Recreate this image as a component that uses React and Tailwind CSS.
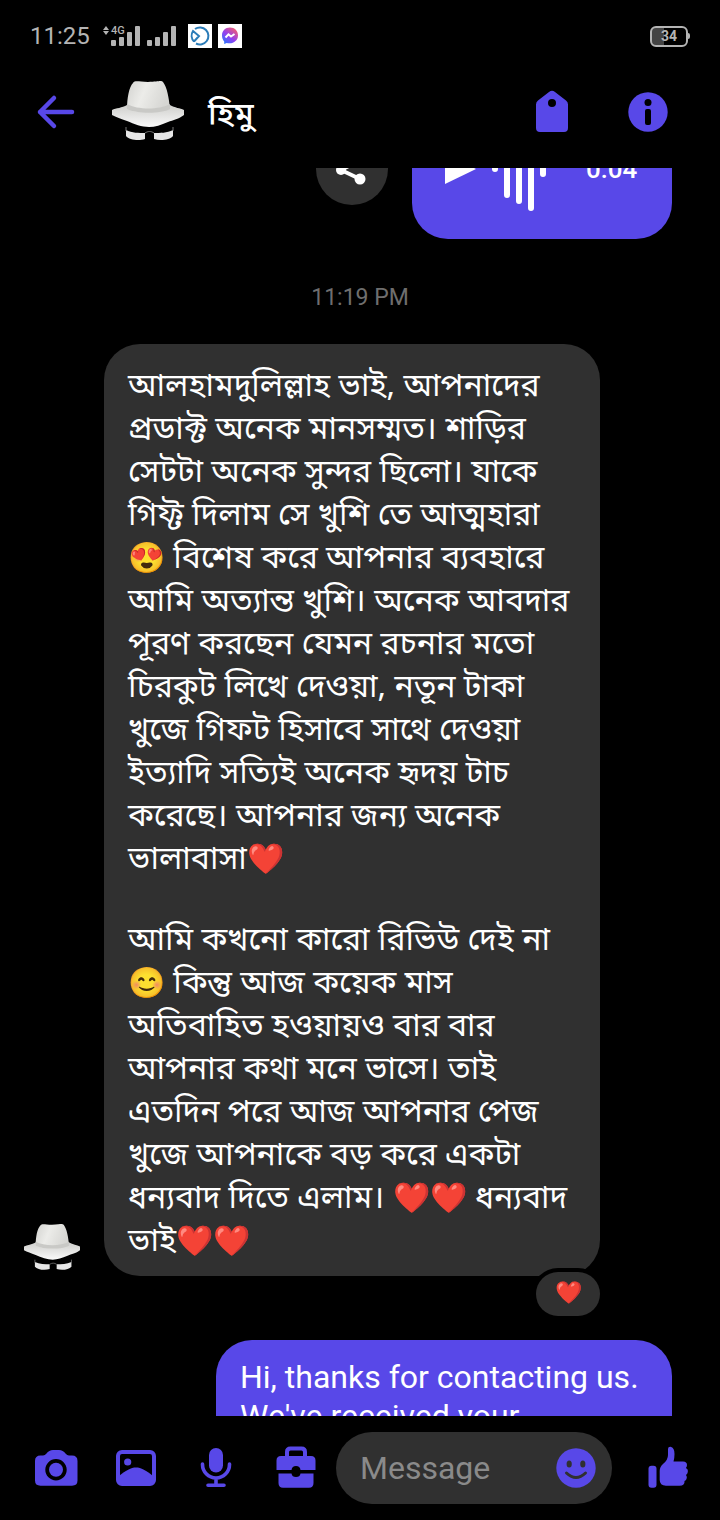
import { useLayoutEffect, useRef } from "react";

const REVIEW = `আলহামদুলিল্লাহ ভাই, আপনাদের
প্রডাক্ট অনেক মানসম্মত। শাড়ির
সেটটা অনেক সুন্দর ছিলো। যাকে
গিফ্ট দিলাম সে খুশি তে আত্মহারা
😍 বিশেষ করে আপনার ব্যবহারে
আমি অত্যান্ত খুশি। অনেক আবদার
পূরণ করছেন যেমন রচনার মতো
চিরকুট লিখে দেওয়া, নতূন টাকা
খুজে গিফট হিসাবে সাথে দেওয়া
ইত্যাদি সত্যিই অনেক হৃদয় টাচ
করেছে। আপনার জন্য অনেক
ভালাবাসা❤️`;

const REVIEW_MORE = `আমি কখনো কারো রিভিউ দেই না
😊 কিন্তু আজ কয়েক মাস
অতিবাহিত হওয়ায়ও বার বার
আপনার কথা মনে ভাসে। তাই
এতদিন পরে আজ আপনার পেজ
খুজে আপনাকে বড় করে একটা
ধন্যবাদ দিতে এলাম। ❤️❤️ ধন্যবাদ
ভাই❤️❤️`;

// emoji are set a little smaller than the words around them
function MessageText({ text }) {
  return text
    .split(/((?:😍|😊|❤️)+)/u)
    .map((part, i) =>
      i % 2 ? (
        <span key={i} className="text-[30px]">
          {part}
        </span>
      ) : (
        part
      ),
    );
}

function HatAvatar({ id, className }) {
  return (
    <svg viewBox="0 0 72 72" className={className} role="img" aria-label="হিমু">
      <defs>
        <linearGradient id={`${id}-crown`} x1="0" x2="1" y1="0" y2="0.3">
          <stop offset="0" stopColor="#d2d2cf" />
          <stop offset="0.45" stopColor="#ecece9" />
          <stop offset="1" stopColor="#d6d6d3" />
        </linearGradient>
        <linearGradient id={`${id}-brim`} x1="0" x2="0" y1="0" y2="1">
          <stop offset="0" stopColor="#cfcfcc" />
          <stop offset="1" stopColor="#fafafa" />
        </linearGradient>
      </defs>
      <path
        d="M0 34C4 32 10 32 15 29H58C63 32 68 32 72 34V39C67 43 61 44 56 46C49 49 43 51 37 51C30 51 22 48 15 45C9 43 4 41 0 39Z"
        fill={`url(#${id}-brim)`}
      />
      <path
        d="M15 33C15 22 17 11 21 7C23 4 27 6 36 6C46 6 49 4 51 6C55 11 57 22 58 33C48 38 25 38 15 33Z"
        fill={`url(#${id}-crown)`}
      />
      <path
        d="M15 28C26 34 47 34 58 28L58 33C48 38 25 38 15 33Z"
        fill="#c9c9c6"
      />
      <path
        d="M14 54C20 57 27 57 33 57V63C27 65 17 64 14 60Z"
        fill="#e6e6e6"
      />
      <path
        d="M61 54C55 57 48 57 42 57V63C48 65 58 64 61 60Z"
        fill="#e6e6e6"
      />
      <path
        d="M14 51L14 55M61 51L61 55M33 57C36 55 39 55 42 57"
        stroke="#777"
        strokeWidth="1"
        fill="none"
      />
    </svg>
  );
}

function SignalBars({ network }) {
  return (
    <svg
      viewBox="0 0 40 24"
      className="h-6 w-10"
      fill="#b4b4b4"
      aria-hidden="true"
    >
      {network && (
        <>
          <path d="M4 2L7 6H1ZM4 11L7 7H1Z" />
          <text
            x="9"
            y="10"
            fontSize="11"
            fontWeight="500"
            fontFamily="Roboto, sans-serif"
          >
            {network}
          </text>
        </>
      )}
      <rect x="9" y="16" width="5" height="6" rx="1" />
      <rect x="17" y="13" width="5" height="9" rx="1" />
      <rect x="25" y="8" width="5" height="14" rx="1" />
      <rect x="33" y="2" width="5" height="20" rx="1" />
    </svg>
  );
}

function StatusBar() {
  return (
    <div className="flex h-[72px] shrink-0 items-center justify-between px-[30px] text-[#b4b4b4]">
      <div className="flex items-center">
        <span className="text-2xl">11:25</span>
        <div className="ml-3 flex">
          <SignalBars network="4G" />
          <div className="-ml-1">
            <SignalBars />
          </div>
        </div>
        <div className="ml-2.5 flex gap-1.5">
          <svg viewBox="0 0 24 24" className="size-6" aria-hidden="true">
            <rect width="24" height="24" fill="#fff" />
            <path
              d="M7 5A8.500 8.500 0 1 1 8 19.500M6 17.500A8.500 8.500 0 0 1 5 7L11 12L6 17.500"
              fill="none"
              stroke="#2b7cb8"
              strokeWidth="2"
            />
          </svg>
          <svg viewBox="0 0 24 24" className="size-6" aria-hidden="true">
            <defs>
              <linearGradient id="messenger" x1="0.1" x2="0.9" y1="1" y2="0">
                <stop offset="0" stopColor="#1f7bff" />
                <stop offset="0.45" stopColor="#9140f0" />
                <stop offset="1" stopColor="#ff6060" />
              </linearGradient>
            </defs>
            <rect width="24" height="24" fill="#fff" />
            <path
              d="M12 3.500C7.200 3.500 4 7 4 11.500C4 14 4.800 16 6.200 17.400V20L8.700 18.900C14.500 20.600 20 17 20 11.500C20 7 16.800 3.500 12 3.500Z"
              fill="url(#messenger)"
            />
            <path
              d="M7.500 13.500L10.500 10.300L13 12.500L16.500 10"
              fill="none"
              stroke="#fff"
              strokeWidth="2"
            />
          </svg>
        </div>
      </div>
      <div className="flex items-center">
        <div className="flex h-[21px] w-[38px] items-center justify-center rounded-md border-2 border-[#b4b4b4] bg-linear-to-r from-[#444] from-35% to-black to-35% text-sm font-bold">
          34
        </div>
        <div className="h-1.5 w-0.5 rounded-r bg-[#b4b4b4]" />
      </div>
    </div>
  );
}

function ChatHeader() {
  return (
    <header className="flex h-24 shrink-0 items-center pr-12 pb-4 pl-8">
      <button aria-label="Back" className="text-[#5848e8]">
        <svg viewBox="0 0 48 48" className="size-12">
          <path
            d="M22 10L8 24L22 38M8 24H40"
            fill="none"
            stroke="currentColor"
            strokeWidth="4.500"
            strokeLinecap="round"
            strokeLinejoin="round"
          />
        </svg>
      </button>
      <HatAvatar id="header" className="ml-8 size-[72px]" />
      <h1 className="ml-6 flex-1 pt-1 text-[32px] leading-[43px] font-medium text-white">
        হিমু
      </h1>
      <div className="flex gap-12 text-[#5848e8]">
        <button aria-label="Label">
          <svg viewBox="0 0 48 48" className="size-12">
            <path
              fillRule="evenodd"
              d="M21 4Q24 1.500 27 4L38 12.500Q40 14 40 16.500V40Q40 44 36 44H12Q8 44 8 40V16.500Q8 14 10 12.500ZM24 11A4 4 0 1 0 24 19A4 4 0 1 0 24 11Z"
              fill="currentColor"
            />
          </svg>
        </button>
        <button aria-label="Conversation info">
          <svg viewBox="0 0 48 48" className="size-12">
            <circle cx="24" cy="24" r="19.700" fill="currentColor" />
            <circle cx="24" cy="14.500" r="3.500" fill="#000" />
            <rect x="21" y="21" width="6" height="16" rx="2" fill="#000" />
          </svg>
        </button>
      </div>
    </header>
  );
}

function VoiceMessage() {
  return (
    <div className="flex items-center justify-end gap-6 pr-12">
      <button
        aria-label="Share"
        className="flex size-[72px] items-center justify-center rounded-full bg-[#303030]"
      >
        <svg viewBox="0 0 36 36" className="size-9">
          <path
            d="M26 9L7 19L26 28"
            fill="none"
            stroke="#fff"
            strokeWidth="4"
          />
          <circle cx="26" cy="9" r="5" fill="#fff" />
          <circle cx="7" cy="19" r="5" fill="#fff" />
          <circle cx="26" cy="28" r="5.500" fill="#fff" />
        </svg>
      </button>
      <div className="flex h-[140px] w-[260px] items-center rounded-[36px] bg-[#5848e8] pl-8 text-white">
        <button aria-label="Play">
          <svg viewBox="0 0 32 36" className="h-9 w-8">
            <path d="M1 2V33L32 18Z" fill="currentColor" />
          </svg>
        </button>
        <svg
          viewBox="0 0 56 88"
          className="ml-4 h-[88px] w-14"
          stroke="currentColor"
          strokeWidth="6"
          strokeLinecap="round"
          aria-hidden="true"
        >
          <path d="M3 41V44M15 17V70M27 11V76M39 4V83M51 40V49" />
        </svg>
        <span className="ml-[38px] text-[26px] font-medium">0:04</span>
      </div>
    </div>
  );
}

function Thread() {
  const listRef = useRef(null);

  // open part-way down the conversation, the voice message half out of view
  useLayoutEffect(() => {
    listRef.current.scrollTop = 69;
  }, []);

  return (
    <main
      ref={listRef}
      className="min-h-0 flex-1 overflow-y-auto pb-12 [scrollbar-width:none]"
    >
      <VoiceMessage />
      <p className="pt-[46px] pb-[34px] text-center text-[23px] leading-[25px] text-[#6e6e6e]">
        11:19 PM
      </p>

      <div className="flex items-end pl-6">
        <HatAvatar id="thread" className="size-14 shrink-0" />
        <div className="relative ml-6 w-[496px] rounded-[36px] bg-[#303030] px-6 pt-[23px] pb-[11px] font-['Noto_Sans_Bengali','Noto_Sans',sans-serif] text-[32px] leading-[43px] text-white">
          <p className="whitespace-pre-line">
            <MessageText text={REVIEW} />
          </p>
          <p className="mt-[38px] whitespace-pre-line">
            <MessageText text={REVIEW_MORE} />
          </p>
          <button
            aria-label="Reactions"
            className="absolute right-0 -bottom-10 box-content flex h-11 w-16 items-center justify-center rounded-full bg-[#303030] text-[22px] ring-4 ring-black"
          >
            ❤️
          </button>
        </div>
      </div>

      <div className="mt-16 flex justify-end pr-12">
        <p className="w-[456px] rounded-[36px] bg-[#5848e8] px-6 py-[18px] text-[32px] leading-[39px] text-white">
          Hi, thanks for contacting us. We've received your
        </p>
      </div>
    </main>
  );
}

function Composer() {
  return (
    <footer className="flex h-[104px] shrink-0 items-center pr-[30px] pl-[34px] text-[#5848e8]">
      <div className="flex gap-9">
        <button aria-label="Camera">
          <svg viewBox="0 0 44 44" className="size-11" fill="currentColor">
            <path
              fillRule="evenodd"
              d="M1 15Q1 9.500 6.500 9.500H9Q11 9.500 12.500 7.500Q15 4 19 4H25Q29 4 31.500 7.500Q33 9.500 35 9.500H38Q43.500 9.500 43.500 15V34.500Q43.500 39.700 38 39.700H6.500Q1 39.700 1 34.500ZM22 13A10.700 10.700 0 1 0 22 34.400A10.700 10.700 0 1 0 22 13Z"
            />
            <circle cx="22" cy="23.700" r="7" />
          </svg>
        </button>
        <button aria-label="Photos">
          <svg viewBox="0 0 44 44" className="size-11" fill="currentColor">
            <rect
              x="4"
              y="6"
              width="36"
              height="32"
              rx="4"
              fill="none"
              stroke="currentColor"
              strokeWidth="4"
            />
            <circle cx="13.700" cy="16" r="3.600" />
            <path d="M4 31C12 24 17 21.500 22 21.500C27 21.500 32 24 40 31V38H4Z" />
          </svg>
        </button>
        <button aria-label="Record voice">
          <svg viewBox="0 0 44 44" className="size-11" fill="currentColor">
            <rect x="15" y="2" width="14" height="24.500" rx="7" />
            <path
              d="M8.500 18V18.500A13.500 13.500 0 0 0 35.500 18.500V18M22 32V39M14 39.300H30"
              fill="none"
              stroke="currentColor"
              strokeWidth="3.600"
              strokeLinecap="round"
            />
          </svg>
        </button>
        <button aria-label="Business tools">
          <svg viewBox="0 0 44 44" className="size-11" fill="currentColor">
            <path
              d="M13 11V6Q13 2.500 16.500 2.500H27.500Q31 2.500 31 6V11"
              fill="none"
              stroke="currentColor"
              strokeWidth="4"
            />
            <path d="M7 10H37Q41.500 10 41.500 14.500V24H26.500Q26 20 22 20Q18 20 17.500 24H2.500V14.500Q2.500 10 7 10Z" />
            <path d="M4.500 27.500H17.500Q18 31 22 31Q26 31 26.500 27.500H39.500V37Q39.500 41.700 35 41.700H9Q4.500 41.700 4.500 37Z" />
          </svg>
        </button>
      </div>

      <div className="ml-[18px] flex h-[72px] min-w-0 flex-1 items-center rounded-full bg-[#303030] pr-3.5 pl-6">
        <input
          type="text"
          aria-label="Message"
          placeholder="Message"
          className="min-w-0 flex-1 text-[32px] text-white outline-none placeholder:text-[#8a8a8a]"
        />
        <button aria-label="Emoji">
          <svg viewBox="0 0 44 44" className="size-11">
            <circle cx="22" cy="22" r="19.700" fill="currentColor" />
            <ellipse cx="15.200" cy="18" rx="2.600" ry="3.600" fill="#303030" />
            <ellipse cx="28.800" cy="18" rx="2.600" ry="3.600" fill="#303030" />
            <path
              d="M12.500 27Q22 36 31.500 27"
              fill="none"
              stroke="#303030"
              strokeWidth="3"
              strokeLinecap="round"
            />
          </svg>
        </button>
      </div>

      <button aria-label="Send like" className="ml-[34px]">
        <svg viewBox="0 0 44 44" className="size-11" fill="currentColor">
          <rect x="2.500" y="19.700" width="8" height="22" rx="3" />
          <path d="M22 3Q22 .7 24.500 .8Q28.500 1.500 28.500 8Q28.500 12 27.500 15.500H37Q41 15.500 41 19Q41 21 39.800 22Q42.300 23.200 41.800 26Q41.500 28 40 29Q41.500 31 40.500 33Q40 34.500 38.500 35Q39 39.700 33.500 39.700H20Q13.700 39.700 13.700 34V25Q13.700 21 17 18Q22 14 22 9Z" />
        </svg>
      </button>
    </footer>
  );
}

export default function App() {
  return (
    <div
      lang="bn"
      className="flex h-screen flex-col bg-black font-[Roboto,'Noto_Sans_Bengali','Noto_Sans',sans-serif]"
    >
      <StatusBar />
      <ChatHeader />
      <Thread />
      <Composer />
    </div>
  );
}
